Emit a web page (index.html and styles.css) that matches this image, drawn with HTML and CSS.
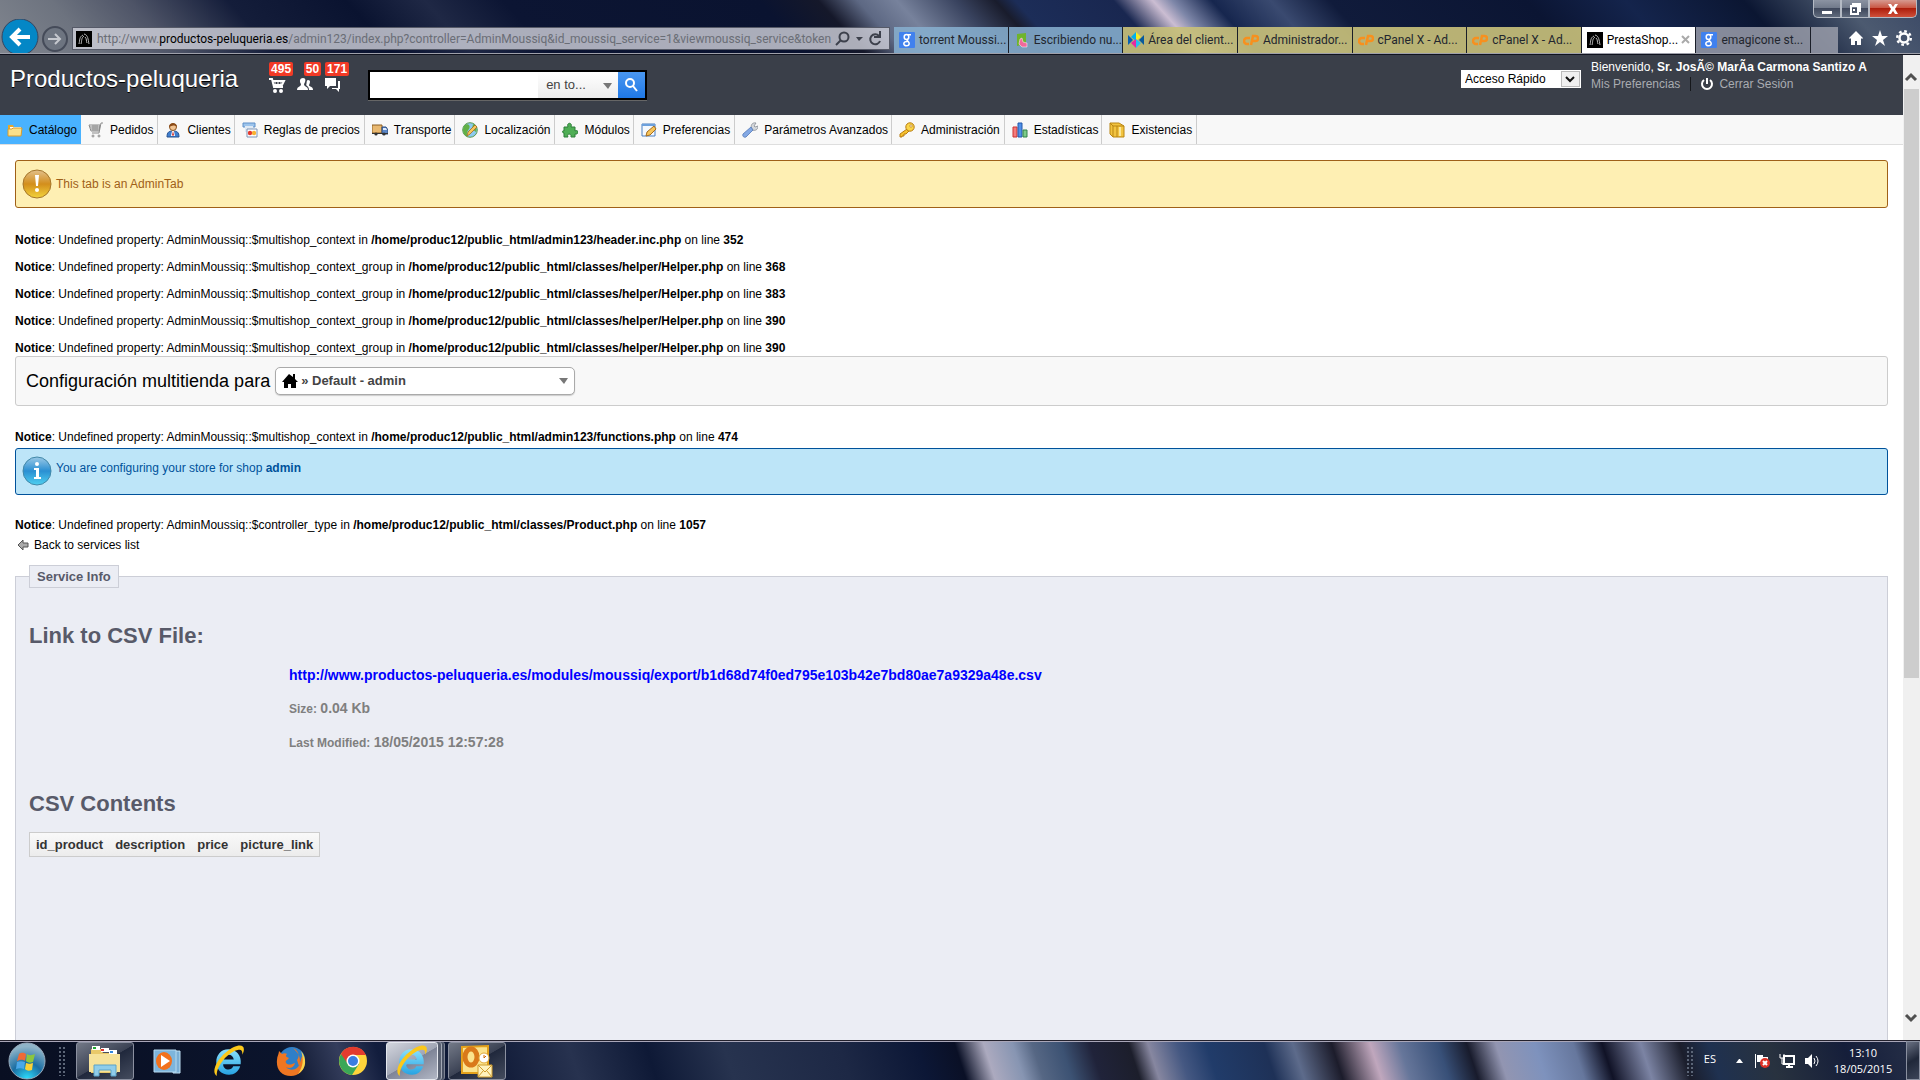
FILE: index.html
```html
<!DOCTYPE html>
<html lang="es">
<head>
<meta charset="utf-8">
<title>PrestaShop</title>
<link rel="stylesheet" href="styles.css">
</head>
<body>
<svg class="defs" aria-hidden="true">
  <defs>
    <linearGradient id="gold" x1="0" y1="0" x2="0" y2="1"><stop offset="0" stop-color="#e2c08c"/><stop offset=".5" stop-color="#d38e1c"/><stop offset="1" stop-color="#f3d43c"/></linearGradient>
    <linearGradient id="aqua" x1="0" y1="0" x2="0" y2="1"><stop offset="0" stop-color="#9bc9e6"/><stop offset=".5" stop-color="#2a8fd2"/><stop offset="1" stop-color="#4fd0f0"/></linearGradient>
    <radialGradient id="orb" cx=".5" cy="1" r=".9"><stop offset="0" stop-color="#2de0ff"/><stop offset=".5" stop-color="#1a6ea3"/><stop offset="1" stop-color="#8fb4c8"/></radialGradient>
    <linearGradient id="ieblue" x1="0" y1="0" x2="0" y2="1"><stop offset="0" stop-color="#8be0fb"/><stop offset="1" stop-color="#27a3e2"/></linearGradient>
    <symbol id="google" viewBox="0 0 16 16"><rect width="16" height="16" rx="1" fill="#4081ee"/><g fill="none" stroke="#fff" stroke-width="1.5"><ellipse cx="7.5" cy="5" rx="2.3" ry="2.5"/><path d="M9 2.7h3M8.6 7.4c-2 1.4 1.6 1.700 1.600 4 0 3-5.400 3-5.400.4 0-1.600 1.800-2.200 3.700-2.200"/></g></symbol>
    <symbol id="hair" viewBox="0 0 16 16"><rect width="16" height="16"/><path d="M3 13c1-4 0-7 4-9M5 13c1-3 0-6 3-8M8 3c4 1 4 5 5 10M9 6c2 2 1 4 2 6" fill="none" stroke="#bbb"/></symbol>
    <symbol id="cpanel" viewBox="0 0 16 16"><g fill="none" stroke="#f7901e" stroke-width="2.500"><path d="M7 6H4a2.500 2.500 0 0 0 0 6h2"/><path d="M8 13l2-9h2.500a2.300 2.300 0 0 1 0 5H10"/></g></symbol>
    <symbol id="ie" viewBox="0 0 32 32"><path d="M15.500 5C8 5 4 11 4 17c0 7 5 12 12 12 5 0 9-3 10.500-8H20c-1 2-2.500 3-4.500 3-3 0-5-2-5-5H27C28 11 23 5 15.500 5zM11 14.500c.5-3 2.500-4.500 4.800-4.500s4.200 1.500 4.700 4.500z" fill="url(#ieblue)"/><path d="M4.500 30C-1 27 4 15 13 8c8-7 17-9 17-3 0 2-.5 3.500-1.500 5 .3-3-.5-5-3.500-4.500C16 7 4 20 4.500 30z" fill="#fbc81b"/></symbol>
  </defs>
</svg>

<header class="browser">
  <div class="titlebar">
    <button class="win" aria-label="Minimizar"><svg width="14" height="12"><path d="M2 8h10v3H2z" fill="#fff"/></svg></button>
    <button class="win" aria-label="Restaurar"><svg width="14" height="14" fill="none" stroke="#fff" stroke-width="2"><path d="M5 4V2h7v7h-2M3 4h7v8H3zM6 7v2"/></svg></button>
    <button class="win win-close" aria-label="Cerrar"><svg width="14" height="12"><path d="M2 1h3l2 3 2-3h3L9 6l3 5H9L7 8l-2 3H2l3-5z" fill="#fff"/></svg></button>
  </div>
  <div class="toolbar">
    <button class="nav-back" aria-label="Atrás"><svg width="38" height="34" viewBox="0 0 38 34"><circle cx="19" cy="18" r="18" fill="#0487c6" stroke="#38455f"/><path d="M29 18H13M19 10l-8 8 8 8" fill="none" stroke="#fff" stroke-width="4"/></svg></button>
    <button class="nav-fwd" aria-label="Adelante"><svg width="26" height="26"><circle cx="13" cy="13" r="12" fill="#6d7480" stroke="#454b59" stroke-width="2"/><path d="M6 13h12M13 8l5 5-5 5" fill="none" stroke="#c5c8ce" stroke-width="2"/></svg></button>
    <div class="address">
      <svg class="i16"><use href="#hair"/></svg>
      <span class="url">http://www.<b>productos-peluqueria.es</b>/admin123/index.php?controller=AdminMoussiq&amp;id_moussiq_service=1&amp;viewmoussiq_service&amp;token</span>
      <svg width="50" height="18" fill="none" stroke="#3d414c" stroke-width="2"><circle cx="9" cy="7" r="4.500"/><path d="M6 10l-5 5"/><path d="M21 7h7l-4 4z" fill="#3d414c" stroke="none"/><path d="M44 6a5 5 0 1 0 1 5M45 1v6h-6"/></svg>
    </div>
    <nav class="tabs">
      <a href="#" class="tab blue"><svg class="i16"><use href="#google"/></svg><span>torrent Moussi...</span></a>
      <a href="#" class="tab blue"><svg class="i16" viewBox="0 0 16 16"><path d="M3 2l9-1v11l-9 2z" fill="#6fb42c"/><path d="M6 7l2-1 1 4 4 1v4H8l-3-3z" fill="#f06a9c" stroke="#fff" stroke-width=".5"/></svg><span>Escribiendo nu...</span></a>
      <a href="#" class="tab yellow"><svg class="i16" viewBox="0 0 16 16"><path d="M8 0l5 5-5 4z" fill="#f8ec22"/><path d="M8 0L3 5l5 4z" fill="#00b0ee"/><path d="M0 3l5 5-5 5z" fill="#0860b0"/><path d="M16 3l-5 5 5 5z" fill="#085a9c"/><path d="M8 7l-5 4 5 5z" fill="#e62aa0"/><path d="M8 7l5 4-5 5z" fill="#24c0f0"/></svg><span>Área del client...</span></a>
      <a href="#" class="tab yellow"><svg class="i16"><use href="#cpanel"/></svg><span>Administrador...</span></a>
      <a href="#" class="tab yellow"><svg class="i16"><use href="#cpanel"/></svg><span>cPanel X - Ad...</span></a>
      <a href="#" class="tab yellow"><svg class="i16"><use href="#cpanel"/></svg><span>cPanel X - Ad...</span></a>
      <a href="#" class="tab active"><svg class="i16"><use href="#hair"/></svg><span>PrestaShop...</span><svg width="10" height="10"><path d="M1 1l7 7M8 1L1 8" stroke="#aaa" stroke-width="2"/></svg></a>
      <a href="#" class="tab gray"><svg class="i16"><use href="#google"/></svg><span>emagicone st...</span></a>
      <button class="newtab" aria-label="Nueva pestaña"></button>
    </nav>
    <div class="tools">
      <button aria-label="Inicio"><svg class="i16" viewBox="0 0 16 16" fill="#fff"><path d="M8 1l7 7-1 1-1-1v7H9v-4H7v4H3V8L2 9 1 8z"/></svg></button>
      <button aria-label="Favoritos"><svg class="i16" viewBox="0 0 16 16" fill="#fff"><path d="M8 0l2 6h6l-5 4 2 6-5-4-5 4 2-6-5-4h6z"/></svg></button>
      <button aria-label="Herramientas"><svg class="i16" viewBox="0 0 16 16" fill="none" stroke="#fff"><circle cx="8" cy="8" r="4.500" stroke-width="2.500"/><circle cx="8" cy="8" r="6.800" stroke-width="2.400" stroke-dasharray="2.670 2.670"/></svg></button>
    </div>
  </div>
</header>

<div class="viewport">
<div class="page">
  <div class="header">
    <a href="#" class="shop">Productos-peluqueria</a>
    <div class="alerts">
      <a href="#"><b>495</b><svg width="18" height="18" fill="none" stroke="#fff" stroke-width="2"><path d="M1 3h3l2 8h9M5 5h11l-2 4H6"/><path d="M7 4v5M10 4v5M13 4v5" stroke-width="1"/><circle cx="7" cy="15" r="1"/><circle cx="13" cy="15" r="1"/></svg></a>
      <a href="#"><b>50</b><svg width="18" height="18" fill="#fff"><path d="M7 2c3 0 3 3 1 6 0 3 4 2 4 6H1c0-4 4-3 4-6C3 5 4 2 7 2z"/><path d="M12 4c3 0 2 3 1 5 0 2 4 1 4 5h-4c0-3-2-4-3-5 1 0 0-5 2-5z"/></svg></a>
      <a href="#"><b>171</b><svg width="18" height="18" fill="#fff"><path d="M1 2h11v8H6l-3 3v-3H1z"/><path d="M14 5h2v8h-1v3l-3-3H8v-1h6z"/></svg></a>
    </div>
    <form class="search">
      <input type="text" aria-label="Buscar">
      <span class="scope"><select aria-label="Ámbito"><option>en to...</option></select><svg class="caret" width="10" height="6"><path d="M0 0h9L5 6z" fill="#777"/></svg></span>
      <button type="button" aria-label="Buscar"><svg width="16" height="16" fill="none" stroke="#fff" stroke-width="2"><circle cx="6" cy="6" r="4"/><path d="M9 9l4 5"/></svg></button>
    </form>
    <span class="quick"><select aria-label="Acceso Rápido"><option>Acceso Rápido</option></select><svg class="arrowbox" width="19" height="16"><path d="M0 0h19v16H0z" fill="#bbb"/><path d="M1 1h17v14H1z" fill="#f0f0f0"/><path d="M5 6l4 4 4-4" fill="none" stroke="#111" stroke-width="2"/></svg></span>
    <div class="user">
      <div>Bienvenido, <b>Sr. JosÃ© MarÃ­a Carmona Santizo A</b></div>
      <div class="links"><a href="#">Mis Preferencias</a><a href="#" class="logout"><svg width="14" height="14" fill="none" stroke="#fff" stroke-width="2"><path d="M4 3a5 5 0 1 0 6 0M7 1v6"/></svg>Cerrar Sesión</a></div>
    </div>
  </div>

  <nav class="menu">
    <a href="#" class="on"><svg class="i16" viewBox="0 0 16 16"><path d="M1 3h5l1 2h7v9H1z" fill="#e8a82c"/><path d="M3 5h11v5H3z" fill="#fff"/><path d="M1 7h4l1-1h9l-1 8H1z" fill="#fbe08a" stroke="#d99c2b"/></svg>Catálogo</a>
    <a href="#"><svg class="i16" viewBox="0 0 16 16" fill="none" stroke="#8a8a8a"><path d="M1 3h11l-1 6H3zM15 1h-2l-2 10H4M2 5h10M3 7h9M5 3v6M7 3v6M9 3v6"/><circle cx="5" cy="14" r="1"/><circle cx="11" cy="14" r="1"/></svg>Pedidos</a>
    <a href="#"><svg class="i16" viewBox="0 0 16 16"><path d="M2 15c0-5 2-6 6-6s6 1 6 6z" fill="#3f7fd0" stroke="#24508f"/><path d="M7 9h2l1 5H6z" fill="#fff"/><path d="M8 9l1 4-1 1-1-1z" fill="#c33"/><circle cx="8" cy="5" r="3.500" fill="#f1c492" stroke="#8b5524"/><path d="M4 5c0-5 8-5 8 0-2-2-5-2-8 0z" fill="#8b4a16"/></svg>Clientes</a>
    <a href="#"><svg class="i16" viewBox="0 0 16 16"><path d="M1 1h12v4H1z" fill="#9cc4ec" stroke="#5f8fc8"/><path d="M3 4h8v6H3z" fill="#dfe9f4"/><path d="M5 7h10v8H5z" fill="#fff" stroke="#7d93b5"/><circle cx="8" cy="11" r="2.200" fill="#e5382c"/><circle cx="12" cy="11" r="2.200" fill="#f9b233"/></svg>Reglas de precios</a>
    <a href="#"><svg class="i16" viewBox="0 0 16 16"><path d="M0 3h10v8H0z" fill="#e8b870" stroke="#8a5d22"/><path d="M10 5h4l2 3v4h-6z" fill="#5b87c8" stroke="#2c4c80"/><path d="M11 6h3l1 2h-4z" fill="#dceaff"/><path d="M0 11h16v1H0z" fill="#333"/><circle cx="4" cy="12" r="1.600" fill="#333"/><circle cx="12" cy="12" r="1.600" fill="#333"/></svg>Transporte</a>
    <a href="#"><svg class="i16" viewBox="0 0 16 16"><circle cx="8" cy="8" r="7.300" fill="#8cc9ee" stroke="#5c9a50"/><path d="M2 4c4-4 7 0 5 3s-3 5-1 8c-5-2-6-7-4-11zM11 2c4 2 4 6 3 8l-4-3z" fill="#62b146"/><path d="M5 14l1-4 7-7 2 2-7 7z" fill="#f5c55c" stroke="#a56b1c" stroke-width=".8"/></svg>Localización</a>
    <a href="#"><svg class="i16" viewBox="0 0 16 16"><path d="M2 5h4c-2-5 5-5 3 0h4v4c4-2 4 4 0 3v3H9c1-4-5-4-3 0H2v-4c-2 0-2-3 0-2z" fill="#4fae55" stroke="#2f7f3b"/></svg>Módulos</a>
    <a href="#"><svg class="i16" viewBox="0 0 16 16"><path d="M1 2h13v12H1z" fill="#f4f8fd" stroke="#4b7fc0"/><path d="M1 2h13v2H1z" fill="#6ca0dc"/><path d="M5 14l1-4 7-6 2 3-6 6z" fill="#f6c45a" stroke="#a56b1c"/></svg>Preferencias</a>
    <a href="#"><svg class="i16" viewBox="0 0 16 16"><path d="M10 7c-2-3 0-7 4-6l-2 3 1 1 3-1c0 4-3 5-6 4z" fill="#d5d8dc" stroke="#868b94" stroke-width=".8"/><path d="M9 5l2 3-7 7c-2 1-4-1-3-3z" fill="#84a9e4" stroke="#5378b8" stroke-width=".8"/></svg>Parámetros Avanzados</a>
    <a href="#"><svg class="i16" viewBox="0 0 16 16"><path d="M8 7l2 2-3 3H5v2H3v1H1v-3z" fill="#f6c22e" stroke="#b77b12"/><circle cx="11" cy="5" r="4.200" fill="#fbd548" stroke="#b77b12"/><circle cx="12" cy="4" r="1.200" fill="#fff" stroke="#b77b12" stroke-width=".7"/></svg>Administración</a>
    <a href="#"><svg class="i16" viewBox="0 0 16 16"><path d="M1 5h4v10H1z" fill="#f47c7c" stroke="#c33"/><path d="M6 1h4v14H6z" fill="#4f90ea" stroke="#2558a8"/><path d="M11 8h4v7h-4z" fill="#7ccb88" stroke="#33824a"/></svg>Estadísticas</a>
    <a href="#"><svg class="i16" viewBox="0 0 16 16"><path d="M1 1h9l5 3v11H4l-3-3z" fill="#f2c440" stroke="#b98512"/><path d="M1 1l3 3h11M4 4v11M8 4v11" fill="none" stroke="#b98512"/><path d="M10 5h2v9h-2z" fill="#fbe79a"/></svg>Existencias</a>
  </nav>

  <main class="content">
    <div class="box warn"><svg width="30" height="30"><circle cx="15" cy="15" r="14" fill="url(#gold)" stroke="#a5762c"/><path d="M13 6h4l-1 11h-2z" fill="#fff"/><circle cx="15" cy="21" r="2" fill="#fff"/></svg><span>This tab is an AdminTab</span></div>

    <div class="notices">
      <p><b>Notice</b>: Undefined property: AdminMoussiq::$multishop_context in <b>/home/produc12/public_html/admin123/header.inc.php</b> on line <b>352</b></p>
      <p><b>Notice</b>: Undefined property: AdminMoussiq::$multishop_context_group in <b>/home/produc12/public_html/classes/helper/Helper.php</b> on line <b>368</b></p>
      <p><b>Notice</b>: Undefined property: AdminMoussiq::$multishop_context_group in <b>/home/produc12/public_html/classes/helper/Helper.php</b> on line <b>383</b></p>
      <p><b>Notice</b>: Undefined property: AdminMoussiq::$multishop_context_group in <b>/home/produc12/public_html/classes/helper/Helper.php</b> on line <b>390</b></p>
      <p><b>Notice</b>: Undefined property: AdminMoussiq::$multishop_context_group in <b>/home/produc12/public_html/classes/helper/Helper.php</b> on line <b>390</b></p>
    </div>

    <div class="multishop">
      <label for="shop">Configuración multitienda para</label>
      <span class="chooser"><svg width="16" height="16"><path d="M7 1l4 3V1h2v5l3 3h-2v6H9v-4H6v4H2V9H0z"/></svg><select id="shop"><option>» Default - admin</option></select><svg width="10" height="6"><path d="M0 0h9L5 6z" fill="#777"/></svg></span>
    </div>

    <div class="notices"><p><b>Notice</b>: Undefined property: AdminMoussiq::$multishop_context in <b>/home/produc12/public_html/admin123/functions.php</b> on line <b>474</b></p></div>

    <div class="box info"><svg width="30" height="30"><circle cx="15" cy="15" r="14" fill="url(#aqua)" stroke="#4288a8"/><circle cx="15" cy="8" r="2" fill="#fff"/><path d="M12 12h5v9h2v2h-7v-2h2v-7h-2z" fill="#fff"/></svg><span>You are configuring your store for shop <b>admin</b></span></div>

    <div class="notices"><p><b>Notice</b>: Undefined property: AdminMoussiq::$controller_type in <b>/home/produc12/public_html/classes/Product.php</b> on line <b>1057</b></p></div>

    <a href="#" class="back"><svg width="16" height="12"><path d="M3 6l5-5v3h5v4H8v3z" fill="#aaa" stroke="#555"/></svg>Back to services list</a>

    <fieldset>
      <legend>Service Info</legend>
      <h2>Link to CSV File:</h2>
      <div class="file">
        <a href="#">http://www.productos-peluqueria.es/modules/moussiq/export/b1d68d74f0ed795e103b42e7bd80ae7a9329a48e.csv</a>
        <p>Size: <b>0.04 Kb</b></p>
        <p>Last Modified: <b>18/05/2015 12:57:28</b></p>
      </div>
      <h2>CSV Contents</h2>
      <table>
        <tr><th>id_product</th><th>description</th><th>price</th><th>picture_link</th></tr>
      </table>
    </fieldset>
  </main>
</div>
<div class="scroll">
  <svg width="17" height="34"><path d="M3 25l5-5 5 5" fill="none" stroke="#505050" stroke-width="3"/></svg>
  <div class="thumb"></div>
  <svg width="17" height="34"><path d="M3 9l5 5 5-5" fill="none" stroke="#505050" stroke-width="3"/></svg>
</div>
</div>

<footer class="taskbar">
  <button class="start" aria-label="Inicio"><svg width="38" height="38"><circle cx="19" cy="19" r="18" fill="url(#orb)" stroke="#9ab"/><path d="M11 12c3-2 5-1 7 0l-1 7c-3-2-5-1-8 0z" fill="#ee6a36"/><path d="M19 12c3 2 5 1 8 0l-2 8c-3 1-5 1-7-1z" fill="#8cc63e"/><path d="M9 20c3-1 5-1 8 0l-1 7c-3-1-5-1-8 0z" fill="#4ba8e8"/><path d="M18 21c3 1 4 1 7 0l-1 7c-3 1-5 1-7-1z" fill="#fbd136"/></svg></button>
  <span class="grip"></span>
  <div class="apps">
    <button class="open" aria-label="Explorador"><svg width="34" height="34" viewBox="0 0 34 34"><path d="M3 5h10l2 4h14v20H3z" fill="#e9c96a"/><path d="M4 2h8v4H4zM13 4h8v4h-8zM21 6h8v4h-8z" fill="#fff"/><path d="M5 3h3v2H5z" fill="#2a3"/><path d="M13 5h3v2h-3z" fill="#d33"/><path d="M22 7h3v2h-3z" fill="#38d"/><path d="M1 10h31v18H1z" fill="#f6e29a"/><path d="M6 32V21h22v11h-5v-6H11v6z" fill="#8fcdea" stroke="#5ba3c8"/></svg></button>
    <button aria-label="Reproductor"><svg width="32" height="32" viewBox="0 0 32 32"><path d="M22 6h7v22h-7z" fill="#7aaed4" stroke="#bfe0f3"/><path d="M3 5h22v22H3z" fill="#7db5dc" stroke="#b7d9ef"/><ellipse cx="13" cy="16" rx="8" ry="9" fill="#f2711c"/><path d="M10 10l9 6-9 6z" fill="#fff"/></svg></button>
    <button aria-label="Internet Explorer"><svg width="34" height="34"><use href="#ie"/></svg></button>
    <button aria-label="Firefox"><svg width="32" height="32" viewBox="0 0 32 32"><circle cx="17" cy="15" r="13" fill="#2f7fc8"/><path d="M18 3c6 3 7 8 4 12l2 6 3-10c7 9-1 20-11 20C6 31 1 24 2 15c0-4 2-6 2-9l3 3c2-1 4-1 5 0-2 2-1 3 2 4-2 3-4 2-3 5 3 3 6 1 9 0-1 5-6 6-9 4 4 5 14 3 14-6 0-6-3-9-7-13z" fill="#ee7622"/><path d="M26 6c6 7 6 18-3 23 5-7 6-15 3-23z" fill="#f9d34a"/></svg></button>
    <button aria-label="Chrome"><svg width="30" height="30" viewBox="0 0 30 30"><circle cx="15" cy="15" r="14" fill="#ffd43b"/><path d="M15 15L3 8a14 14 0 0 0 11 21l7-11z" fill="#3aa757"/><path d="M3 8A14 14 0 0 1 28 9H15l-5 9z" fill="#e33b2e"/><circle cx="15" cy="15" r="6.500" fill="#fff"/><circle cx="15" cy="15" r="5" fill="#3b7de0"/></svg></button>
    <button class="open current" aria-label="Internet Explorer abierto"><svg width="34" height="34"><use href="#ie"/></svg></button>
    <button class="open" aria-label="Outlook"><svg width="34" height="34" viewBox="0 0 34 34"><path d="M2 3l26-1v27H2z" fill="#fbe38d" stroke="#e4a11b" stroke-width="2"/><ellipse cx="11" cy="13" rx="6" ry="8" fill="none" stroke="#d9791a" stroke-width="5"/><circle cx="24" cy="14" r="5" fill="#fff" stroke="#e0a93a"/><path d="M24 11v3l2-2" fill="none" stroke="#c60"/><path d="M18 21h14v12H18z" fill="#fff2bd" stroke="#cf9c2c"/><path d="M18 21l7 7 7-7M18 33l5-6M32 33l-5-6" fill="none" stroke="#cf9c2c"/></svg></button>
  </div>
  <span class="grip"></span>
  <div class="tray">
    <span class="lang">ES</span>
    <svg width="10" height="6"><path d="M1 5l3-4h1l3 4z" fill="#fff"/></svg>
    <svg width="16" height="16"><path d="M1 1h1v14H1zM3 2h6v2h5v7H9L8 9H3z" fill="#fff"/><circle cx="11" cy="10" r="5" fill="#dd3226"/><path d="M9 8l4 4M13 8l-4 4" stroke="#fff" stroke-width="2"/></svg>
    <svg width="16" height="16" fill="none" stroke="#fff" stroke-width="1"><path d="M5 3h10v8H5zM7 14h7M10 11v3" stroke-width="2"/><path d="M1 1v4h4V1M3 5v6h2"/></svg>
    <svg width="16" height="16"><path d="M1 5h3l4-4v14l-4-4H1z" fill="#fff"/><path d="M10 5q2 3 0 6M12 3q4 5 0 10" fill="none" stroke="#fff"/></svg>
  </div>
  <div class="clock"><time>13:10</time><time>18/05/2015</time></div>
  <button class="desk" aria-label="Mostrar escritorio"></button>
</footer>
</body>
</html>
```

FILE: styles.css
```css
* { box-sizing: border-box; }
body {
  margin: 0;
  height: 100vh;
  display: flex;
  flex-direction: column;
  overflow: hidden;
  font: 12px/14px "Liberation Sans", Arial, sans-serif;
  color: #000;
}
a { color: inherit; text-decoration: none; }
button, input, select { margin: 0; padding: 0; border: 0; background: none; font: inherit; color: inherit; }
select { appearance: none; }
svg { display: block; flex: none; }
p { margin: 0; }
.defs { position: absolute; width: 0; height: 0; }
.i16 { width: 16px; height: 16px; }

/* Browser frame */
.browser {
  flex: none;
  font-family: Roboto, "Open Sans", sans-serif;
  border-bottom: 1px solid #10131f;
  background:
    linear-gradient(48deg, #81868f 0%, #6d737f 5%, #4e5467 9%, #141d3a 14%, #0a1330 20%, #1f2845 24%, #0c1533 28%, #0a1330 41%, #15182a 44%, #5d6883 46%, #77829c 48%, #39435f 51%, #191c2c 53%, #1c2d58 54%, #192750 59%, #cbbdd2 61%, #7d86a8 62%, #16264e 64%, #3a4a70 67%, #101b3b 70%, #0b1533 80%, #14244c 85%, #0b1632 91%, #4c5a70 96%, #3b4966 100%);
}
.titlebar { height: 27px; padding-right: 3px; display: flex; justify-content: flex-end; align-items: flex-start; }
.win {
  height: 18px;
  width: 28px;
  display: grid;
  place-items: center;
  border: 1px solid #b4bac4;
  border-top: 0;
  background: linear-gradient(#8b93a2, #6f7889 50%, #3f485c 50%, #5f6a7c);
}
.win:first-child { border-radius: 0 0 0 5px; }
.win-close { width: 48px; border-radius: 0 0 5px 0; background: linear-gradient(#d69a90, #c8503c 50%, #ad1e0c 50%, #d0503a); }
.toolbar { height: 27px; display: flex; align-items: flex-start; border-bottom: 1px solid #9ea0aa; }
.nav-back { height: 26px; width: 39px; margin-left: 1px; overflow: visible; display: flex; align-items: flex-end; }
.nav-fwd { width: 26px; height: 24px; margin-left: 2px; margin-right: 4px; display: flex; align-items: center; }
.address {
  flex: 1;
  min-width: 0;
  height: 23px;
  padding: 0 4px 0 3px;
  display: flex;
  align-items: center;
  gap: 5px;
  background: rgba(206, 208, 217, .82);
  border: 1px solid #565a68;
}
.url { flex: 1; min-width: 0; white-space: nowrap; color: #6a6d76; }
.url b { font-weight: 400; color: #000; }
.tabs { display: flex; margin-left: 4px; width: 944px; height: 26px; }
.tab {
  flex: 1;
  min-width: 0;
  padding: 0 4px 0 5px;
  display: flex;
  align-items: center;
  gap: 4px;
  white-space: nowrap;
  color: #22262e;
  border-right: 1px solid #1a1e28;
}
.tab span { flex: 1; min-width: 0; }
.blue { background: rgba(134, 174, 206, .88); }
.yellow { background: rgba(199, 191, 122, .92); }
.gray { background: rgba(154, 158, 170, .85); }
.active { background: #fff; color: #000; }
.newtab { width: 27px; background: rgba(154, 158, 170, .85); }
.tools { display: flex; gap: 8px; padding: 3px 8px 0 10px; }

/* Scrolling page area */
.viewport { flex: 1; min-height: 0; display: flex; background: #fff; }
.page { flex: 1; min-width: 0; overflow: hidden; }
.scroll { width: 17px; flex: none; display: flex; flex-direction: column; background: #f0f0f0; }
.thumb { height: 589px; background: #cdcdcd; margin: 0 1px; }
.scroll svg:last-child { margin-top: auto; }

.header { height: 60px; display: flex; align-items: flex-start; padding: 0 31px 0 10px; background: #3a3f49; color: #fff; }
.shop { margin-top: 10px; font-size: 24px; line-height: 28px; text-shadow: 0 1px 0 #000; }
.alerts { display: flex; gap: 3px; margin: 7px 0 0 30px; }
.alerts a { display: flex; flex-direction: column; min-width: 25px; }
.alerts b { align-self: flex-end; padding: 0 2px; background: #f23a26; border-radius: 2px; font-size: 12px; line-height: 14px; }
.search { display: flex; width: 279px; height: 30px; margin: 15px 0 0 19px; border: 2px solid #000; background: #fff; color: #444; box-shadow: 0 1px 0 #666; }
.search input { flex: 1; min-width: 0; }
.scope { position: relative; width: 80px; display: flex; background: linear-gradient(#fff, #ececec); }
.scope select { flex: 1; padding-left: 8px; font-size: 13px; }
.caret { position: absolute; right: 5px; top: 11px; }
.search button { width: 27px; display: grid; place-items: center; background: linear-gradient(#4a97f0, #1f78e6); }
.quick { position: relative; display: flex; width: 120px; height: 18px; margin: 15px 10px 0 auto; background: #fff; color: #000; }
.quick select { flex: 1; padding-left: 4px; }
.arrowbox { position: absolute; right: 1px; top: 1px; }
.user { width: 281px; padding-top: 5px; line-height: 14px; white-space: nowrap; }
.links { display: flex; margin-top: 3px; color: #a9acb1; }
.links a { padding-right: 10px; }
.logout { display: flex; gap: 5px; padding-left: 9px; border-left: 1px solid #15171b; }

.menu { display: flex; height: 30px; background: #f8f8f8; border-bottom: 1px solid #dedede; white-space: nowrap; }
.menu a { display: flex; align-items: center; gap: 6px; padding: 0 3px 0 7px; border-right: 1px solid #ccc; }
.menu a:nth-child(even) { padding-right: 4px; }
.menu .on { background: #49b2ff; border-color: #49b2ff; }

.content { padding: 15px 15px 0; }
.box { display: flex; gap: 4px; padding: 7px 6px; border: 1px solid; border-radius: 3px; }
.warn { height: 48px; align-items: center; background: #feefb3; color: #9f6018; border-color: #9f6018; }
.info { height: 47px; background: #bde5f8; color: #00529b; }
.info span { padding-top: 5px; }
.notices { display: grid; gap: 13px; }
.warn + .notices { padding: 25px 0 1px; }
.multishop { display: flex; align-items: center; gap: 5px; height: 50px; padding: 0 10px; background: #f8f8f8; border: 1px solid #ccc; border-radius: 3px; }
.multishop label { font-size: 18px; line-height: 20px; }
.chooser { display: flex; align-items: center; gap: 3px; width: 300px; height: 28px; padding: 0 5px 0 6px; background: #fff; border: 1px solid #aaa; border-radius: 5px; box-shadow: 0 1px 1px #ccc; }
.chooser select { flex: 1; font-weight: 700; font-size: 13px; color: #444; }
.multishop + .notices { padding: 24px 0 4px; }
.info + .notices { padding: 23px 0 6px; }
.back { display: flex; align-items: center; gap: 3px; }
fieldset { margin: 13px 0 0; padding: 0 13px; min-width: 0; min-height: 620px; border: 1px solid #ccced7; background: #ebedf4; }
legend { padding: 3px 7px; font-size: 13px; line-height: 15px; font-weight: 700; color: #585a69; background: #ebedf4; border: 1px solid #ccced7; }
h2 { margin: 0; font-size: 22px; line-height: 26px; color: #585a69; }
legend + h2 { margin-top: 35px; }
.file { padding: 18px 0 40px 260px; display: grid; gap: 18px; font-weight: 700; color: #7f7f7f; }
.file a { font-size: 14px; line-height: 16px; color: #00f; }
.file p { line-height: 15px; }
.file b { font-size: 14px; }
table { margin-top: 15px; border: 1px solid #ccc; border-spacing: 0; background: linear-gradient(#f9f9f9, #ececec); }
th { padding: 4px 6px; font-size: 13px; line-height: 15px; color: #333; }

/* Desktop taskbar */
.taskbar {
  flex: none;
  height: 40px;
  display: flex;
  align-items: center;
  border-top: 1px solid #23212d;
  font-family: "Open Sans", "Noto Sans", sans-serif;
  font-size: 11px;
  color: #fff;
  background:
    linear-gradient(#a9a6b8 0 1px, transparent 1px),
    linear-gradient(72deg, #090f22 0%, #0b142c 15%, #343d5c 18%, #121d3d 20%, #0d1734 25%, #27324f 30%, #0e1936 34%, #27334f 38%, #1d2845 44%, #0c1736 48%, #0a1026 50%, #acaabf 51.500%, #8795b2 53%, #566784 54%, #3c5273 55.500%, #20233a 57%, #1c1e2b 59%, #8787a0 60%, #455882 61.500%, #213c6a 63%, #1e3157 66%, #5d6b8b 67.500%, #1c1c2b 69.500%, #c0a7bd 71.500%, #66769a 73%, #385078 75%, #181b2c 76.500%, #9295b1 78%, #7e92bd 80%, #66779d 82%, #101226 83.500%, #7c84a4 85.500%, #1b1e2c 87.500%, #1f3150 89%, #28323f 92%, #151e3a 96%, #273048 100%);
}
.start { margin-left: 8px; }
.grip { width: 8px; height: 30px; margin-left: 12px; background: radial-gradient(circle, #5b6577 1px, transparent 1px) 0 0 / 4px 4px; }
.apps { display: flex; gap: 4px; margin-left: 10px; margin-right: auto; }
.apps button { width: 58px; height: 38px; display: grid; place-items: center; }
.apps .open { border: 1px solid #8b90a0; border-radius: 3px; background: linear-gradient(150deg, #737987, #3b4254 50%, #20283c 51%, #444c5e); }
.apps .current { width: 52px; margin-right: 6px; border-color: #e4e7ee; background: linear-gradient(150deg, #d3d6de, #a0a5b4 50%, #7e8497 51%, #b2b7c5); box-shadow: 3px 0 0 #596071, 4px 0 0 #a3a8b5, 6px 0 0 #485064, 7px 0 0 #7c8292; }
.tray { display: flex; align-items: center; gap: 9px; margin-left: 10px; }
.lang { margin-right: 10px; padding-bottom: 4px; }
.clock { width: 86px; text-align: center; line-height: 16px; }
.clock time { display: block; }
.desk { width: 14px; height: 39px; border: 1px solid #8a90a0; background: linear-gradient(150deg, #6a7183, #20283a 50%, #3c4458); }
```
